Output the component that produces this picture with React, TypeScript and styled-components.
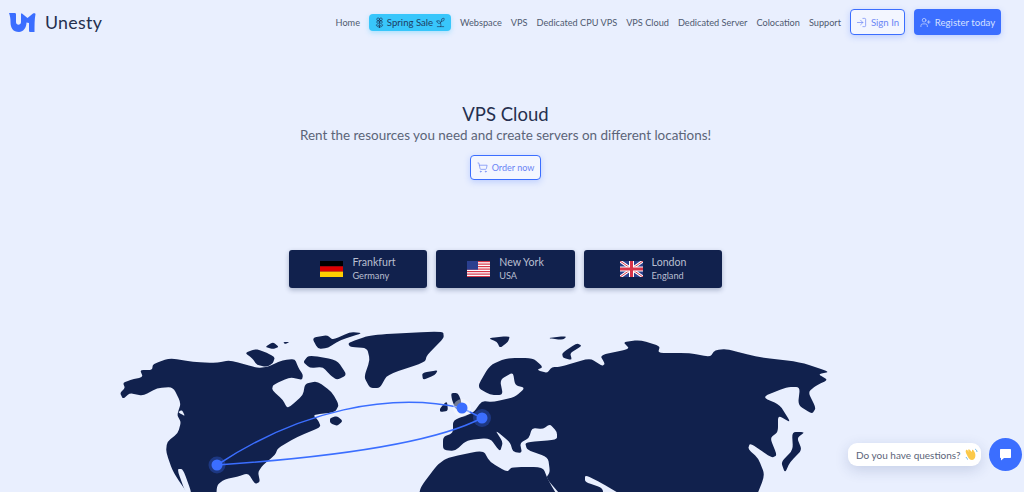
import React from 'react';
import styled, { createGlobalStyle } from 'styled-components';
import { LogIn, UserPlus, ShoppingCart, Flower2, Sprout } from 'lucide-react';

const GlobalStyle = createGlobalStyle`
  html, body {
    margin: 0;
    padding: 0;
    height: 100%;
    overflow: hidden;
    background: #e9effe;
  }
  * { box-sizing: border-box; }
`;

const colors = {
  navy: '#11214d',
  blue: '#3b6eff',
  link: '#4f5a70',
  text: '#5b6478',
};

const Page = styled.div`
  position: relative;
  width: 1024px;
  height: 492px;
  overflow: hidden;
  background: #e9effe;
  font-family: Lato, 'Open Sans', sans-serif;
  color: ${colors.navy};
`;

const Header = styled.header`
  display: flex;
  align-items: center;
  justify-content: space-between;
  height: 44px;
  padding: 0 23px 0 9px;
`;

const Brand = styled.div`
  display: flex;
  align-items: center;
  gap: 9px;
  font-size: 17.8px;
  letter-spacing: 0.3px;
  color: #25304f;
`;

const Nav = styled.nav`
  display: flex;
  align-items: center;
  gap: 9px;
`;

const NavLink = styled.a`
  font-size: 9.18px;
  color: ${colors.link};
  white-space: nowrap;
`;

const SalePill = styled.a`
  display: flex;
  align-items: center;
  justify-content: center;
  gap: 2px;
  width: 82px;
  height: 17px;
  border-radius: 4px;
  background: #38c6fb;
  box-shadow: 0 2px 5px rgba(56, 198, 251, 0.35);
  font-size: 9.6px;
  color: #1d3c63;
  white-space: nowrap;
`;

const OutlineButton = styled.a`
  display: flex;
  align-items: center;
  justify-content: center;
  gap: 4px;
  border: 1.5px solid ${colors.blue};
  border-radius: 4px;
  background: #f3f6ff;
  box-shadow: 0 2px 6px rgba(59, 110, 255, 0.25);
  font-size: 9.6px;
  color: #6a85f5;
  white-space: nowrap;
`;

const SignIn = styled(OutlineButton)`
  width: 55px;
  height: 26px;
`;

const Register = styled.a`
  display: flex;
  align-items: center;
  justify-content: center;
  gap: 4px;
  width: 87px;
  height: 26px;
  border-radius: 4px;
  background: ${colors.blue};
  box-shadow: 0 2px 6px rgba(59, 110, 255, 0.25);
  font-size: 9.6px;
  color: #d5e0ff;
  white-space: nowrap;
`;

const Hero = styled.section`
  display: flex;
  flex-direction: column;
  align-items: center;
  width: 1011px;
  padding-top: 59px;
`;

const Title = styled.h1`
  margin: 0;
  font-size: 18.5px;
  line-height: 22px;
  font-weight: 400;
  color: #25304f;
`;

const Subtitle = styled.p`
  margin: 0;
  font-size: 13.45px;
  line-height: 20px;
  color: ${colors.text};
`;

const OrderButton = styled(OutlineButton)`
  width: 71px;
  height: 25px;
  margin-top: 10px;
  font-size: 9px;
`;

const Cards = styled.div`
  display: flex;
  justify-content: center;
  gap: 9px;
  margin-top: 70px;
`;

const Card = styled.div`
  display: flex;
  align-items: center;
  justify-content: center;
  gap: 9px;
  width: 138.5px;
  height: 38px;
  border-radius: 3px;
  background: ${colors.navy};
  box-shadow: 0 2px 5px rgba(17, 33, 77, 0.3);
`;

const CardText = styled.div`
  display: flex;
  flex-direction: column;
`;

const City = styled.span`
  font-size: 10.6px;
  line-height: 13.5px;
  color: #b9bfd0;
`;

const Country = styled.span`
  font-size: 9.2px;
  line-height: 13px;
  color: #b9bfd0;
`;

const MapSvg = styled.svg`
  display: block;
  width: 1024px;
  height: 204px;
`;

const Chat = styled.div`
  position: absolute;
  right: 2px;
  top: 438px;
  display: flex;
  align-items: center;
  gap: 8px;
`;

const ChatBubble = styled.div`
  display: flex;
  align-items: center;
  gap: 4px;
  width: 133px;
  height: 23px;
  padding-left: 8px;
  border-radius: 9px;
  background: #fff;
  box-shadow: 0 4px 14px rgba(40, 60, 120, 0.18);
  font-size: 10px;
  color: #5b6478;
  white-space: nowrap;
`;

const ChatButton = styled.div`
  display: flex;
  align-items: center;
  justify-content: center;
  width: 33px;
  height: 33px;
  border-radius: 50%;
  background: ${colors.blue};
`;

// outlines are point lists, corners get rounded a little at render
const smooth = (raw: string) => {
  const p = raw.trim().split(/\s+/).map(s => s.split(',').map(Number));
  const along = (a: number[], b: number[], t: number) =>
    `${(a[0] + (b[0] - a[0]) * t).toFixed(1)},${(a[1] + (b[1] - a[1]) * t).toFixed(1)}`;
  let d = '';
  p.forEach((pt, i) => {
    const prev = p[(i + p.length - 1) % p.length];
    const next = p[(i + 1) % p.length];
    d += `${i ? ' L' : 'M'}${along(pt, prev, 0.3)} Q${pt[0]},${pt[1]} ${along(pt, next, 0.3)}`;
  });
  return d + 'Z';
};

const land = [
  // north america
  `120,393 125,388 123,383 130,380 143,377 140,370 152,370 153,364 170,358 193,362 217,363 230,360 257,368 267,367 283,360 295,359 298,367 303,375 302,380 290,377 273,385 272,390 283,400 287,408 292,405 303,395 305,384 317,381 332,392 339,405 335,412 313,415 318,420 321,427 297,437 278,448 275,455 263,465 258,472 260,482 255,484 248,473 237,477 225,479 217,485 216,500 192,500 173,472 166,452 167,442 178,433 181,422 177,415 181,403 173,387 157,388 143,396 130,393 123,399`,
  // arctic islands
  `245,353 255,349 263,351 275,357 273,363 267,367 257,365 252,358`,
  `265,347 273,342 279,347 273,349`,
  `283,342 290,342 285,344`,
  `303,362 309,355 337,360 347,375 337,380 330,375 323,367 310,368`,
  `312,338 327,335 333,340 350,332 363,333 340,340 328,348 318,349`,
  // greenland, iceland, newfoundland
  `348,343 370,335 443,331 444,338 427,355 425,362 387,375 380,388 370,388 364,377 370,360 367,348 350,347`,
  `422,373 438,370 435,375 423,380`,
  `330,418 337,416 343,421 337,426 330,423`,
  // uk, ireland
  `440,408 447,401 448,411 440,412`,
  `451,393 458,393 462,403 456,410 452,400`,
  // eurasia
  `443,450 443,437 453,433 453,420 473,413 482,401 493,402 515,397 525,388 515,385 513,372 500,380 503,395 490,395 477,387 490,365 507,358 533,358 543,367 537,370 547,373 552,367 560,367 590,358 602,366 605,364 600,355 630,349 623,342 640,340 660,346 658,353 690,353 710,357 715,350 727,349 757,357 800,362 830,372 818,374 828,380 817,385 808,392 816,408 812,414 798,405 800,387 787,387 762,397 780,405 791,423 778,415 778,432 770,438 777,455 772,458 750,443 748,449 758,458 765,475 755,500 630,500 600,482 585,475 585,482 603,488 603,500 565,500 546,478 550,472 548,457 527,450 525,442 557,440 557,432 550,424 543,429 532,428 529,438 520,443 522,453 513,452 510,442 495,430 503,442 500,452 490,438 467,440 455,451`,
  // africa
  `419,500 420,488 437,465 447,458 483,450 490,462 507,472 512,467 543,467 548,480 560,500`,
  // svalbard, novaya, sakhalin / japan
  `488,338 510,336 508,342 500,348 497,342`,
  `547,338 567,336 563,340`,
  `562,353 577,343 582,346 570,353 572,360 563,358`,
  `792,432 805,432 797,438 802,450 790,462 785,473 781,462 793,450`,
];

const WorldMap = () => (
  <MapSvg viewBox="0 288 1024 204">
    {land.map(points => (
      <path key={points} d={smooth(points)} fill={colors.navy} />
    ))}
    <path d={smooth('177,469 183,469 192,494 186,494')} fill="#e9effe" />
    <path d={smooth('178,412 182,410 185,416 181,414')} fill="#e9effe" />
    <path d="M217 465 C300 410 390 392 462 408 L482 418" fill="none" stroke={colors.blue} strokeWidth="1.5" />
    <path d="M217 465 C320 458 430 445 482 418" fill="none" stroke={colors.blue} strokeWidth="1.5" />
    <circle cx="217" cy="465" r="8.5" fill={colors.blue} opacity="0.3" />
    <circle cx="217" cy="465" r="5.5" fill={colors.blue} />
    <circle cx="462" cy="408" r="9" fill="#fff" opacity="0.4" />
    <circle cx="462" cy="408" r="5.500" fill={colors.blue} />
    <circle cx="482" cy="418" r="9" fill={colors.blue} opacity="0.3" />
    <circle cx="482" cy="418" r="5.5" fill={colors.blue} />
  </MapSvg>
);

const Logo = () => (
  <svg width="27" height="19" viewBox="0 0 27 19">
    <path
      fill={colors.blue}
      d="M0 0 H6 C7 0 7 1 7 2 V9 C7 12.500 12 12.500 12 9 V0.500 H13 L18.500 5 L24 0.500 C25 0 26.500 0 26.500 1 C25.500 6 25.500 12 25.500 19 H21 C20 19 20 18 20 17 V10 L17.500 9.500 C17.500 15 14 19 10 19 C4 19 1.500 15 1.500 9 C1.500 5 1 3 0 0Z"
    />
  </svg>
);

const Germany = () => (
  <svg width="23" height="16" viewBox="0 0 23 16">
    <rect width="23" height="5.400" fill="#000" />
    <rect y="5.300" width="23" height="5.400" fill="#d00" />
    <rect y="10.600" width="23" height="5.400" fill="#ffce00" />
  </svg>
);

const Usa = () => (
  <svg width="23" height="16" viewBox="0 0 23 16">
    <rect width="23" height="16" fill="#fff" />
    {[0, 2.5, 5, 7.5, 10, 12.5, 15].map(y => (
      <rect key={y} y={y} width="23" height="1.200" fill="#d8354a" />
    ))}
    <rect width="11" height="8.700" fill="#2a3f8f" />
  </svg>
);

const Uk = () => (
  <svg width="23" height="16" viewBox="0 0 23 16">
    <rect width="23" height="16" fill="#2b3f8c" />
    <path d="M0 0 L23 16 M23 0 L0 16" stroke="#fff" strokeWidth="3" />
    <path d="M0 0 L23 16 M23 0 L0 16" stroke="#d8354a" strokeWidth="1" />
    <path d="M11.500 0 V16 M0 8 H23" stroke="#fff" strokeWidth="5" />
    <path d="M11.500 0 V16 M0 8 H23" stroke="#d8354a" strokeWidth="3" />
  </svg>
);

const Wave = () => (
  <svg width="13" height="13" viewBox="0 0 13 13">
    <path d="M1 2 C2 1 3 3 4 4 L3 2 C4 1 5 2 6 3 L7 4 L7 2 C8 1 9 3 10 5 C11 8 10 12 7 12 C4 12 3 9 1 5 C0.500 4 0.500 3 1 2Z" fill="#fbc94a" />
    <path d="M10 1 C11 1.500 12 2.500 12 4 M1 9 C1.500 10 2 11 3 11.500" stroke="#6fb8e8" strokeWidth="1" fill="none" />
  </svg>
);

const locations = [
  { city: 'Frankfurt', country: 'Germany', Flag: Germany },
  { city: 'New York', country: 'USA', Flag: Usa },
  { city: 'London', country: 'England', Flag: Uk },
];

const navBefore = ['Home'];
const navAfter = ['Webspace', 'VPS', 'Dedicated CPU VPS', 'VPS Cloud', 'Dedicated Server', 'Colocation', 'Support'];

export default function App() {
  return (
    <Page>
      <GlobalStyle />
      <Header>
        <Brand>
          <Logo />
          Unesty
        </Brand>
        <Nav>
          {navBefore.map(item => (
            <NavLink key={item}>{item}</NavLink>
          ))}
          <SalePill>
            <Flower2 size={11} strokeWidth={1.5} />
            Spring Sale
            <Sprout size={11} strokeWidth={1.5} />
          </SalePill>
          {navAfter.map(item => (
            <NavLink key={item}>{item}</NavLink>
          ))}
          <SignIn>
            <LogIn size={11} strokeWidth={1.5} />
            Sign In
          </SignIn>
          <Register>
            <UserPlus size={11} strokeWidth={1.5} />
            Register today
          </Register>
        </Nav>
      </Header>
      <Hero>
        <Title>VPS Cloud</Title>
        <Subtitle>Rent the resources you need and create servers on different locations!</Subtitle>
        <OrderButton>
          <ShoppingCart size={11} strokeWidth={1.5} />
          Order now
        </OrderButton>
        <Cards>
          {locations.map(({ city, country, Flag }) => (
            <Card key={city}>
              <Flag />
              <CardText>
                <City>{city}</City>
                <Country>{country}</Country>
              </CardText>
            </Card>
          ))}
        </Cards>
      </Hero>
      <WorldMap />
      <Chat>
        <ChatBubble>
          Do you have questions?
          <Wave />
        </ChatBubble>
        <ChatButton>
          <svg width="13" height="13" viewBox="0 0 13 13">
            <path d="M2 1 H11 C11.800 1 12 1.500 12 2 V9 C12 9.500 11.800 10 11 10 H5 L2 12.500 V10 C1.200 10 1 9.500 1 9 V2 C1 1.500 1.200 1 2 1Z" fill="#fff" />
          </svg>
        </ChatButton>
      </Chat>
    </Page>
  );
}
